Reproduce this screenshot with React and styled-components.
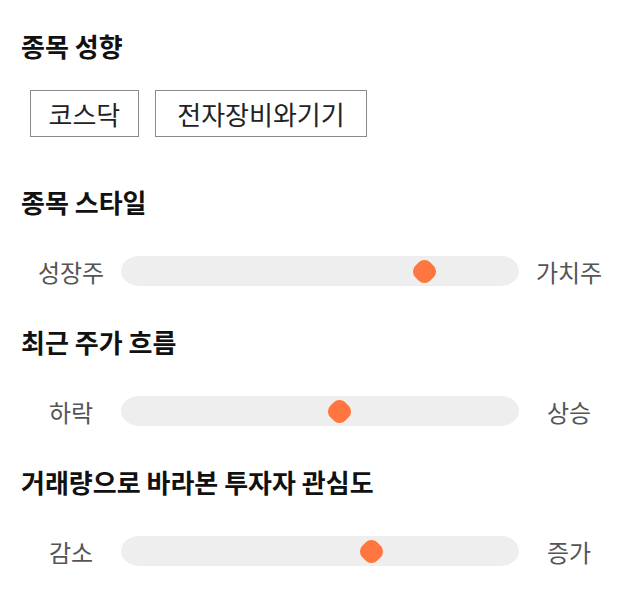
import React from 'react';
import styled, { createGlobalStyle } from 'styled-components';

const GlobalStyle = createGlobalStyle`
  body {
    margin: 0;
    background: #ffffff;
    font-family: "Noto Sans CJK KR", "Noto Sans", sans-serif;
  }
`

const Page = styled.div`
  padding: 31px 21px 0;
  width: 640px;
  box-sizing: border-box;
`

const Section = styled.section`
  margin-bottom: ${props => props.$after}px;
`

const Heading = styled.h2`
  margin: 0;
  font-size: 26px;
  line-height: 30px;
  font-weight: 700;
  color: #111111;
`

const ChipRow = styled.div`
  display: flex;
  gap: 16px;
  margin-top: 29px;
  padding-left: 9px;
`

const Chip = styled.div`
  height: 47px;
  box-sizing: border-box;
  padding: 0 ${props => props.$pad}px;
  display: flex;
  align-items: center;
  border: 1px solid #8a8a8a;
  font-size: 26px;
  color: #222222;
`

const SliderRow = styled.div`
  display: flex;
  align-items: center;
  margin-top: 39px;
  height: 30px;
`

const Label = styled.span`
  width: 100px;
  flex: none;
  text-align: center;
  font-size: 24px;
  color: #555555;
`

const Track = styled.div`
  position: relative;
  flex: 1;
  height: 30px;
  background: #eeeeee;
  border-radius: 18px / 15px;
`

const Thumb = styled.div`
  position: absolute;
  top: 50%;
  width: 21px;
  height: 21px;
  margin: -10.5px 0 0 -10.5px;
  background: #ff7640;
  border-radius: 8px;
  transform: rotate(45deg);
`

const sliders = [
  { title: '종목 스타일', left: '성장주', right: '가치주', pos: 303 },
  { title: '최근 주가 흐름', left: '하락', right: '상승', pos: 218.5 },
  { title: '거래량으로 바라본 투자자 관심도', left: '감소', right: '증가', pos: 250 },
];

export default function App() {
  return (
    <>
      <GlobalStyle />
      <Page>
        <Section $after={50}>
          <Heading>종목 성향</Heading>
          <ChipRow>
            <Chip $pad={17.5}>코스닥</Chip>
            <Chip $pad={21.5}>전자장비와기기</Chip>
          </ChipRow>
        </Section>
        {sliders.map(s => (
          <Section key={s.title} $after={41}>
            <Heading>{s.title}</Heading>
            <SliderRow>
              <Label>{s.left}</Label>
              <Track>
                <Thumb style={{ left: s.pos }} />
              </Track>
              <Label>{s.right}</Label>
            </SliderRow>
          </Section>
        ))}
      </Page>
    </>
  );
}
